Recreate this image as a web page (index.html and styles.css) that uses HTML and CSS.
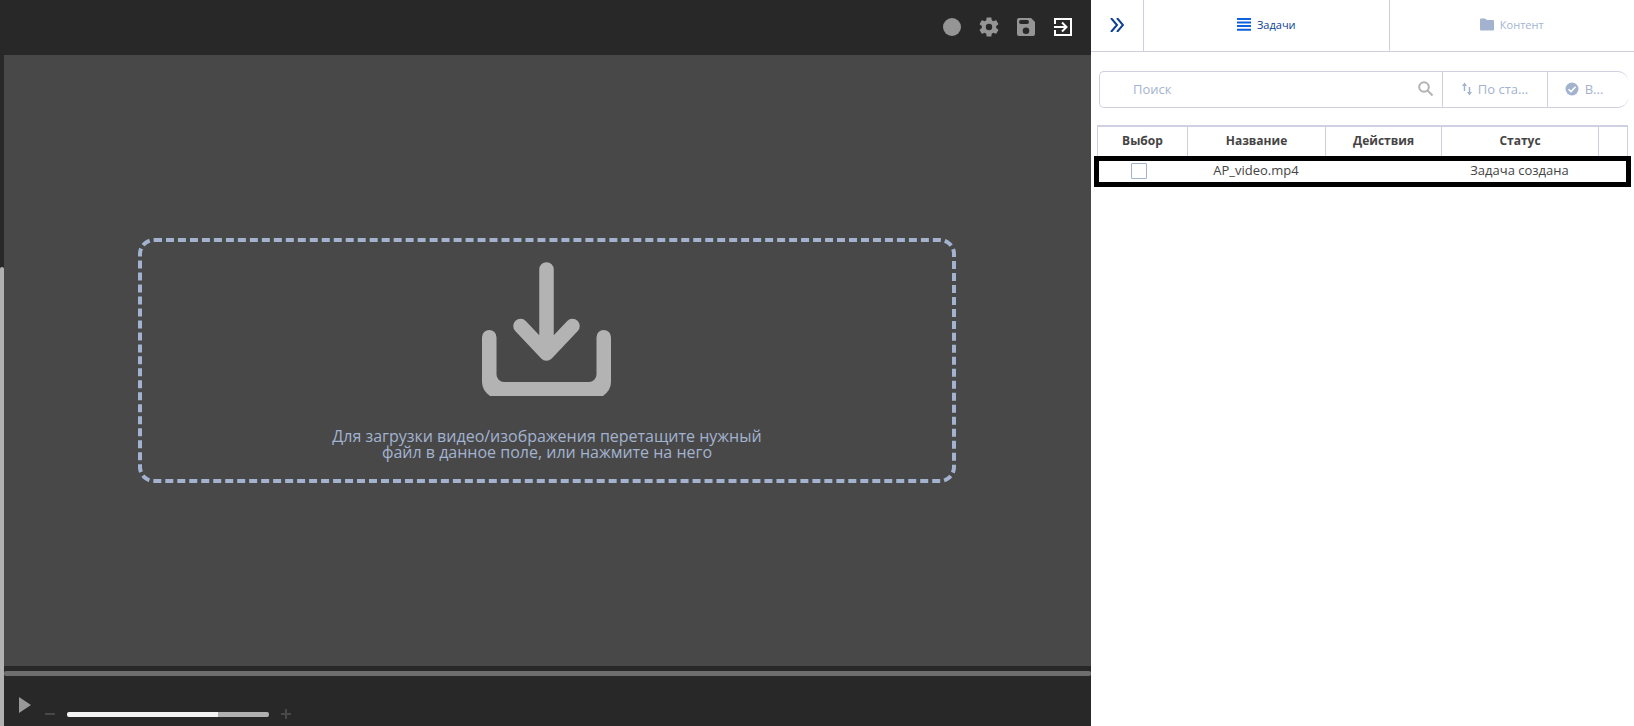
FILE: index.html
```html
<!DOCTYPE html>
<html lang="ru">
<head>
<meta charset="utf-8">
<meta name="viewport" content="width=device-width, initial-scale=1">
<title>Редактор</title>
<link rel="stylesheet" href="styles.css">
</head>
<body>
<div class="app">
  <div class="rail"><div class="rail-thumb"></div></div>
  <main class="editor">
    <header class="toolbar">
      <button class="tool" aria-label="Запись"><svg viewBox="0 0 20 20"><circle cx="10" cy="10" r="9"/></svg></button>
      <button class="tool" aria-label="Настройки"><svg viewBox="2 2 20 20"><path d="M19.14 12.94c.04-.3.06-.61.06-.94 0-.32-.02-.64-.07-.94l2.03-1.58c.18-.14.23-.41.12-.61l-1.92-3.32c-.12-.22-.37-.29-.59-.22l-2.39.96c-.5-.38-1.03-.7-1.62-.94l-.36-2.54c-.04-.24-.24-.41-.48-.41h-3.84c-.24 0-.43.17-.47.41l-.36 2.54c-.59.24-1.13.57-1.62.94l-2.39-.96c-.22-.08-.47 0-.59.22L2.74 8.87c-.12.21-.08.47.12.61l2.03 1.58c-.05.3-.09.63-.09.94s.02.64.07.94l-2.03 1.58c-.18.14-.23.41-.12.61l1.92 3.32c.12.22.37.29.59.22l2.39-.96c.5.38 1.03.7 1.62.94l.36 2.54c.05.24.24.41.48.41h3.84c.24 0 .44-.17.47-.41l.36-2.54c.59-.24 1.13-.56 1.62-.94l2.39.96c.22.08.47 0 .59-.22l1.92-3.32c.12-.22.07-.47-.12-.61l-2.01-1.58zM12 15.2a3.2 3.2 0 1 1 0-6.4 3.2 3.2 0 0 1 0 6.4z"/></svg></button>
      <button class="tool" aria-label="Сохранить"><svg viewBox="0 0 20 20"><path fill-rule="evenodd" d="M3 1h12l4 4v12a2 2 0 0 1-2 2H3a2 2 0 0 1-2-2V3a2 2 0 0 1 2-2zM5 3a2 2 0 0 0 0 4h6a2 2 0 0 0 0-4zM10 10.500a3.300 3.300 0 1 0 0 6.600 3.300 3.300 0 0 0 0-6.600z"/></svg></button>
      <button class="tool tool-exit" aria-label="Выход"><svg viewBox="0 0 20 20"><path fill="none" stroke="currentColor" stroke-width="2" d="M2 7V2h16v16H2v-5M1 10h12M9 5.500l4.500 4.500L9 14.500"/></svg></button>
    </header>
    <section class="canvas">
      <button class="dropzone">
        <svg class="drop-icon" viewBox="0 0 130 134"><path fill="none" stroke="currentColor" stroke-width="14.500" stroke-linecap="round" stroke-linejoin="round" d="M64.500 7.500V91M38.500 64L64.500 91.500 90.500 64"/><path fill="currentColor" d="M0 75.200a7.250 7.250 0 0 1 14.500 0V112.500a7.500 7.500 0 0 0 7.500 7.500H107a7.500 7.500 0 0 0 7.500-7.500V75.200a7.250 7.250 0 0 1 14.500 0V120q0 8-8 14H8q-8-6-8-14z"/></svg>
        <span class="drop-text">Для загрузки видео/изображения перетащите нужный файл в данное поле, или нажмите на него</span>
      </button>
    </section>
    <div class="timeline"></div>
    <footer class="player">
      <button class="play" aria-label="Воспроизвести"><svg viewBox="0 0 12 16"><path d="M0 0l12 8-12 8z"/></svg></button>
      <button class="step" aria-label="Уменьшить"><svg viewBox="0 0 10 10"><path d="M0 5h10"/></svg></button>
      <input class="zoom" type="range" min="0" max="100" value="75" aria-label="Масштаб">
      <button class="step" aria-label="Увеличить"><svg viewBox="0 0 10 10"><path d="M0 5h10M5 0v10"/></svg></button>
    </footer>
  </main>
  <aside class="panel">
    <nav class="tabs">
      <button class="collapse" aria-label="Свернуть"><svg viewBox="0 0 14 14"><path d="M1 0l6 7-6 7M7 0l6 7-6 7"/></svg></button>
      <button class="tab tab-active"><svg viewBox="0 0 14 13"><path d="M0 1h14M0 4.500h14M0 8h14M0 11.800h14"/></svg>Задачи</button>
      <button class="tab"><svg viewBox="0 0 14 12"><path fill="currentColor" stroke="none" d="M1 0h4l2 1.500h6a1 1 0 0 1 1 1V11a1 1 0 0 1-1 1H1a1 1 0 0 1-1-1V1a1 1 0 0 1 1-1z"/></svg>Контент</button>
    </nav>
    <div class="filters">
      <label class="search">
        <input type="text" placeholder="Поиск" aria-label="Поиск">
        <svg viewBox="0 0 16 16"><circle cx="6" cy="6" r="4.800"/><path d="M9.500 9.500l5 5"/></svg>
      </label>
      <button class="filter filter-sort"><svg viewBox="0 0 10 14"><path fill="none" stroke="currentColor" stroke-width="1.500" d="M2.500 9V2M7.500 5v7"/><path d="M0 4l2.500-3.500L5 4zM5 10l2.500 3.500L10 10z"/></svg>По ста...</button>
      <button class="filter filter-all"><svg viewBox="0 0 14 14"><circle cx="7" cy="7" r="6.500"/><path fill="none" stroke="#fff" stroke-width="1.500" d="M3.500 7.200L6 9.600l4.600-4.800"/></svg>В...</button>
    </div>
    <table class="tasks">
      <colgroup><col class="col-pick"><col><col class="col-actions"><col class="col-status"><col class="col-end"></colgroup>
      <thead><tr><th>Выбор</th><th>Название</th><th>Действия</th><th>Статус</th><th></th></tr></thead>
      <tbody><tr><td class="pick"><input type="checkbox" aria-label="AP_video.mp4"></td><td>AP_video.mp4</td><td></td><td>Задача создана</td><td></td></tr></tbody>
    </table>
  </aside>
</div>
</body>
</html>
```
FILE: styles.css
```css
* { box-sizing: border-box; }
body { margin: 0; font-family: "Open Sans", "Noto Sans", sans-serif; font-size: 13px; color: #444; background: #fff; }
button { margin: 0; padding: 0; border: 0; background: none; font: inherit; color: inherit; cursor: pointer; }
svg { display: block; flex: none; }
.app { display: flex; height: 100vh; overflow: hidden; }

.rail { flex: none; width: 4px; background: #282828; display: flex; flex-direction: column; justify-content: flex-end; }
.rail-thumb { height: calc(100% - 267px); background: #b1b1b1; border-top-left-radius: 2px; border-top-right-radius: 2px; }

.editor { flex: 1; min-width: 0; display: flex; flex-direction: column; background: #282828; }
.toolbar { flex: none; height: 55px; padding: 0 18px 2px 0; display: flex; align-items: center; justify-content: flex-end; gap: 17px; color: #959595; }
.tool svg { width: 20px; height: 20px; fill: currentColor; }
.tool-exit { color: #fff; }
.canvas { flex: 1; min-height: 0; padding-right: 1px; display: flex; align-items: center; justify-content: center; background: #484848; }
.dropzone { width: 818px; max-width: 90%; height: 245px; padding-top: 20px; display: flex; flex-direction: column; align-items: center; justify-content: flex-start; gap: 32px; border: 4px dashed #a3b3cf; border-radius: 16px; }
.drop-icon { width: 130px; height: 134px; color: #b3b3b3; }
.drop-text { max-width: 460px; font-size: 16px; line-height: 16px; text-align: center; color: #a3b3cf; }
.timeline { flex: none; height: 5px; margin-top: 5px; background: #6e6e6e; border-radius: 2px; }
.player { flex: none; height: 50px; padding: 0 15px; display: flex; align-items: flex-start; }
.play { margin: 21px 14px 0 0; }
.play svg { width: 12px; height: 16px; fill: #999; }
.step { margin-top: 33px; }
.step svg { width: 10px; height: 10px; fill: none; stroke: #484848; stroke-width: 2; }
.zoom { appearance: none; width: 202px; height: 5px; margin: 36px 12px 0; border-radius: 2px; background: linear-gradient(to right, #f3f3f3 75%, #b0b0b0 75%); }
.zoom::-webkit-slider-thumb { appearance: none; width: 1px; height: 5px; background: transparent; }

.panel { flex: none; width: 543px; background: #fff; }
.tabs { height: 52px; display: flex; border-bottom: 1px solid #cfd0e1; }
.collapse { width: 53px; padding-bottom: 1px; display: flex; align-items: center; justify-content: center; border-right: 1px solid #cfd0e1; }
.collapse svg { width: 14px; height: 14px; fill: none; stroke: #0c3f94; stroke-width: 2; }
.tab { flex: 1; padding-bottom: 2px; display: flex; align-items: center; justify-content: center; gap: 6px; font-size: 11px; color: #a3b3cf; }
.tab svg { width: 14px; height: 13px; fill: none; stroke: #0f62dc; stroke-width: 2; }
.tab-active { color: #0c3f94; border-right: 1px solid #cfd0e1; }

.filters { display: flex; height: 37px; margin: 19px 6px 0 8px; border: 1px solid #cfd0e1; border-right: 0; border-radius: 5px 10px 10px 5px; color: #a3b3cf; }
.search { flex: 1; min-width: 0; display: flex; align-items: center; padding: 0 8px 2px 33px; }
.search input { flex: 1; min-width: 0; padding: 0; border: 0; outline: 0; background: none; font: inherit; color: #444; }
.search input::placeholder { color: #a3b3cf; opacity: 1; }
.search svg { width: 16px; height: 16px; fill: none; stroke: #b3b3b3; stroke-width: 2; }
.filter { display: flex; align-items: center; justify-content: center; gap: 6px; padding-bottom: 2px; border-left: 1px solid #cfd0e1; }
.filter svg { fill: currentColor; }
.filter-sort { width: 105px; }
.filter-sort svg { width: 10px; height: 14px; }
.filter-all { width: 81px; padding-right: 8px; }
.filter-all svg { width: 14px; height: 14px; }

.tasks { width: calc(100% - 12px); margin: 17px 6px 0; table-layout: fixed; border-spacing: 0; border-top: 2px solid #cfd0e1; text-align: center; }
.col-pick { width: 90px; }
.col-actions { width: 116px; }
.col-status { width: 157px; }
.col-end { width: 30px; }
.tasks th { height: 29px; padding: 0 0 2px; font-size: 12px; line-height: 18px; font-weight: 700; border-left: 1px solid #cfd0e1; }
.tasks th:last-child { border-right: 1px solid #cfd0e1; }
.tasks td { height: 31px; padding: 0 0 4px; line-height: 18px; }
.tasks tbody tr { position: relative; }
.tasks .pick { padding: 0 6px 2px 0; }
.tasks .pick::after { content: ""; position: absolute; inset: 0 -3px; border: 5px solid #000; pointer-events: none; }
.tasks input { appearance: none; display: block; width: 16px; height: 16px; margin: 0 auto; border: 1px solid #a3b3cf; border-radius: 1px; background: #fff; }
```
